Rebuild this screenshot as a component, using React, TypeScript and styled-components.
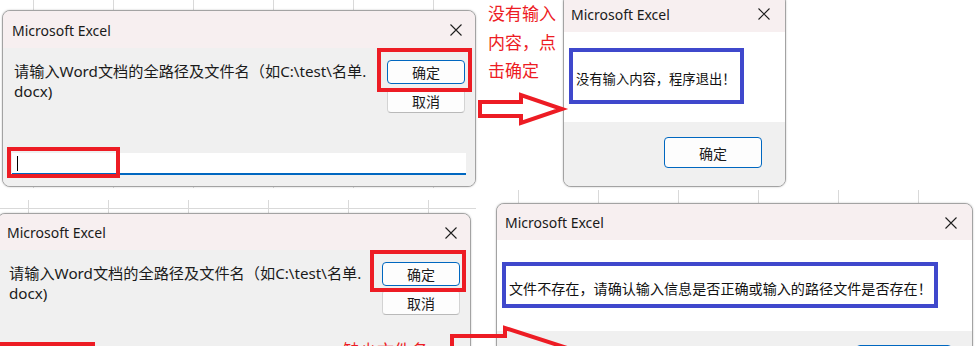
import React from "react";
import styled, { createGlobalStyle } from "styled-components";

const RED = "#ed1c24";
const INDIGO = "#3f48cc";
const WIN_BLUE = "#0067c0";
const UI_FONT = `"Noto Sans", "Noto Sans CJK SC", sans-serif`;

const GlobalStyle = createGlobalStyle`
  *, *::before, *::after {
    box-sizing: border-box;
  }
  html, body {
    margin: 0;
    padding: 0;
    background: #fff;
  }
  body {
    font-family: ${UI_FONT};
    color: #1b1b1b;
  }
`;

const Canvas = styled.div`
  position: relative;
  width: 980px;
  height: 346px;
  overflow: hidden;
  background: #fff;
`;

interface Place {
  $x: number;
  $y: number;
  $w: number;
  $h: number;
}

// piece of the excel sheet peeking out behind a dialog
const Sheet = styled.div<Place & { $offset: number; $row?: number }>`
  position: absolute;
  left: ${(p) => p.$x}px;
  top: ${(p) => p.$y}px;
  width: ${(p) => p.$w}px;
  height: ${(p) => p.$h}px;
  background-color: #fff;
  background-image: ${(p) =>
      p.$row !== undefined
        ? `linear-gradient(#d9d9d9, #d9d9d9),`
        : ""}
    repeating-linear-gradient(
      90deg,
      transparent 0,
      transparent ${(p) => p.$offset}px,
      #d9d9d9 ${(p) => p.$offset}px,
      #d9d9d9 ${(p) => p.$offset + 1}px,
      transparent ${(p) => p.$offset + 1}px,
      transparent 80px
    );
  background-size: ${(p) => (p.$row !== undefined ? "100% 1px, auto" : "auto")};
  background-position: ${(p) => (p.$row !== undefined ? `0 ${p.$row}px, 0 0` : "0 0")};
  background-repeat: no-repeat, repeat;
`;

const Window = styled.div<Place>`
  position: absolute;
  left: ${(p) => p.$x}px;
  top: ${(p) => p.$y}px;
  width: ${(p) => p.$w}px;
  height: ${(p) => p.$h}px;
  display: flex;
  flex-direction: column;
  border: 1px solid #a3a3a3;
  border-radius: 8px;
  overflow: hidden;
  background: #f0f0f0;
  box-shadow: 0 0 2px rgba(0, 0, 0, 0.25);
`;

const TitleBar = styled.div<{ $h: number; $pad: number; $closePad: number }>`
  flex: none;
  height: ${(p) => p.$h}px;
  display: flex;
  align-items: center;
  justify-content: space-between;
  padding: 1px ${(p) => p.$closePad}px 0 ${(p) => p.$pad}px;
  background: #f7eff0;
`;

const Title = styled.span`
  font-size: 14px;
  color: #1a1a1a;
`;

const CloseIcon = () => (
  <svg width="12" height="12" viewBox="0 0 12 12">
    <path d="M0.5 0.5 L11.5 11.5 M11.5 0.5 L0.5 11.5" stroke="#1f1f1f" strokeWidth="1.1" fill="none" />
  </svg>
);

const PromptBody = styled.div`
  flex: 1;
  display: flex;
  flex-direction: column;
  padding: 12px 9px 11px 9px;
  background: #f0f0f0;
`;

const PromptRow = styled.div`
  display: flex;
  justify-content: space-between;
  align-items: flex-start;
`;

const PromptText = styled.p`
  margin: 0;
  padding: 1px 0 0 2px;
  font-size: 15.2px;
  line-height: 20px;
  color: #1b1b1b;
`;

const ButtonStack = styled.div`
  display: flex;
  flex-direction: column;
  gap: 4px;
  margin-right: 1px;
`;

const Button = styled.button<{ $primary?: boolean; $w: number; $h: number }>`
  width: ${(p) => p.$w}px;
  height: ${(p) => p.$h}px;
  padding: 0;
  font-family: ${UI_FONT};
  font-size: 14px;
  color: #1b1b1b;
  background: #fdfdfd;
  border: 1px solid ${(p) => (p.$primary ? WIN_BLUE : "#d3d3d3")};
  border-bottom-color: ${(p) => (p.$primary ? WIN_BLUE : "#b9b9b9")};
  border-radius: 4px;
`;

const InputField = styled.div`
  margin-top: auto;
  height: 22px;
  display: flex;
  align-items: center;
  padding-left: 5px;
  background: #fff;
  border-bottom: 2px solid ${WIN_BLUE};
`;

const Caret = styled.span`
  width: 1px;
  height: 15px;
  background: #000;
`;

const MessageArea = styled.div<{ $h: number; $top: number }>`
  flex: none;
  height: ${(p) => p.$h}px;
  padding: ${(p) => p.$top}px 0 0 5px;
  background: #fff;
`;

// message outlined in indigo by the author of the screenshot
const Message = styled.div<{ $w: number; $h: number; $size: number }>`
  width: ${(p) => p.$w}px;
  height: ${(p) => p.$h}px;
  display: flex;
  align-items: center;
  padding: 5px 0 0 3px;
  border: 4px solid ${INDIGO};
  font-size: ${(p) => p.$size}px;
  color: #111;
  white-space: nowrap;
`;

const Footer = styled.div<{ $top: number; $right: number }>`
  flex: 1;
  display: flex;
  justify-content: flex-end;
  align-items: flex-start;
  padding: ${(p) => p.$top}px ${(p) => p.$right}px 0 0;
  background: #f0f0f0;
`;

const RedBox = styled.div<Place>`
  position: absolute;
  left: ${(p) => p.$x}px;
  top: ${(p) => p.$y}px;
  width: ${(p) => p.$w}px;
  height: ${(p) => p.$h}px;
  border: 4px solid ${RED};
`;

const Note = styled.div<{ $x: number; $y: number }>`
  position: absolute;
  left: ${(p) => p.$x}px;
  top: ${(p) => p.$y}px;
  font-family: "Noto Sans CJK SC", sans-serif;
  font-size: 17px;
  line-height: 28.5px;
  color: ${RED};
  white-space: nowrap;
`;

const Overlay = styled.svg`
  position: absolute;
  left: 0;
  top: 0;
  pointer-events: none;
`;

interface PromptProps extends Place {
  titleH: number;
  titlePad: number;
}

const PromptDialog = ({ titleH, titlePad, ...place }: PromptProps) => (
  <Window {...place}>
    <TitleBar $h={titleH} $pad={titlePad} $closePad={13}>
      <Title>Microsoft Excel</Title>
      <CloseIcon />
    </TitleBar>
    <PromptBody>
      <PromptRow>
        <PromptText>
          请输入Word文档的全路径及文件名（如C:\test\名单.
          <br />
          docx)
        </PromptText>
        <ButtonStack>
          <Button $primary $w={78} $h={24}>
            确定
          </Button>
          <Button $w={78} $h={25}>
            取消
          </Button>
        </ButtonStack>
      </PromptRow>
      <InputField>
        <Caret />
      </InputField>
    </PromptBody>
  </Window>
);

interface MessageProps extends Place {
  titleH: number;
  titlePad: number;
  closePad: number;
  text: string;
  textSize: number;
  areaH: number;
  areaTop: number;
  boxW: number;
  boxH: number;
  btnTop: number;
  btnRight: number;
  btnW: number;
}

const MessageDialog = (p: MessageProps) => (
  <Window $x={p.$x} $y={p.$y} $w={p.$w} $h={p.$h}>
    <TitleBar $h={p.titleH} $pad={p.titlePad} $closePad={p.closePad}>
      <Title>Microsoft Excel</Title>
      <CloseIcon />
    </TitleBar>
    <MessageArea $h={p.areaH} $top={p.areaTop}>
      <Message $w={p.boxW} $h={p.boxH} $size={p.textSize}>
        {p.text}
      </Message>
    </MessageArea>
    <Footer $top={p.btnTop} $right={p.btnRight}>
      <Button $primary $w={p.btnW} $h={31}>
        确定
      </Button>
    </Footer>
  </Window>
);

export default function App() {
  return (
    <>
      <GlobalStyle />
      <Canvas>
        <Sheet $x={0} $y={0} $w={478} $h={188} $offset={33} />
        <Sheet $x={0} $y={200} $w={476} $h={146} $offset={28} $row={8} />
        <Sheet $x={497} $y={190} $w={476} $h={20} $offset={21} />

        <PromptDialog $x={2} $y={10} $w={474} $h={177} titleH={37} titlePad={9} />
        <MessageDialog
          $x={563}
          $y={-6}
          $w={223}
          $h={193}
          titleH={37}
          titlePad={7}
          closePad={15}
          text="没有输入内容，程序退出！"
          textSize={13.3}
          areaH={90}
          areaTop={16}
          boxW={175}
          boxH={56}
          btnTop={15}
          btnRight={23}
          btnW={98}
        />
        <PromptDialog $x={-3} $y={213} $w={474} $h={170} titleH={36} titlePad={9} />
        <MessageDialog
          $x={496}
          $y={203}
          $w={477}
          $h={170}
          titleH={36}
          titlePad={8}
          closePad={15}
          text="文件不存在，请确认输入信息是否正确或输入的路径文件是否存在！"
          textSize={14.1}
          areaH={91}
          areaTop={22}
          boxW={436}
          boxH={46}
          btnTop={14}
          btnRight={20}
          btnW={96}
        />

        <RedBox $x={377} $y={48} $w={95} $h={44} />
        <RedBox $x={7} $y={147} $w={113} $h={31} />
        <RedBox $x={370} $y={250} $w={96} $h={42} />
        <RedBox $x={-4} $y={342} $w={99} $h={30} />

        <Note $x={488} $y={-1}>
          没有输入
          <br />
          内容，点
          <br />
          击确定
        </Note>
        <Note $x={343} $y={336}>
          缺少文件名
        </Note>

        <Overlay width={980} height={346} viewBox="0 0 980 346">
          <polygon
            points="480,102 521,102 521,95 562,109 521,123 521,116 480,116"
            fill="none"
            stroke={RED}
            strokeWidth={4}
          />
          <polygon
            points="452,336 505,336 505,328 564,347 505,366 505,350 452,350"
            fill="none"
            stroke={RED}
            strokeWidth={4}
          />
        </Overlay>
      </Canvas>
    </>
  );
}
